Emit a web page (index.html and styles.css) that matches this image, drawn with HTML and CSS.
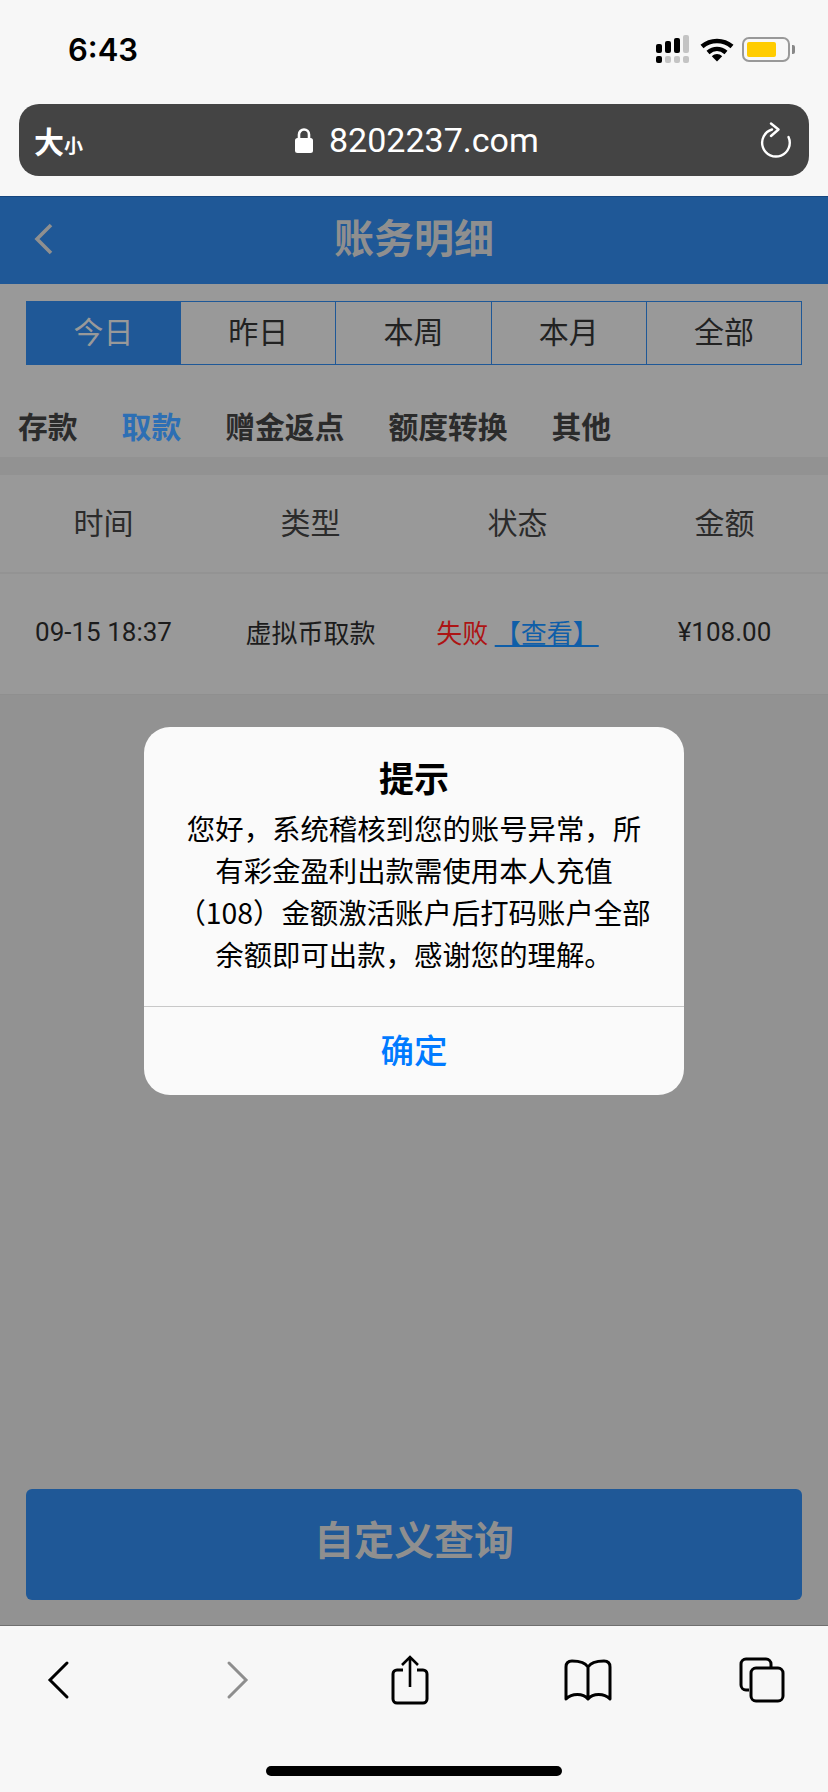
FILE: index.html
```html
<!DOCTYPE html>
<html lang="zh-CN">
<head>
  <meta charset="UTF-8" />
  <meta name="viewport" content="width=device-width, initial-scale=1.0"/>
  <title>账务明细</title>
  <link rel="stylesheet" href="styles.css">
</head>
<body>

<!-- Safari top bar -->
<div class="browser-top">
  <div class="status">
    <span class="time">6:43</span>
    <div class="status-icons">
      <svg width="34" height="28" viewBox="0 0 34 28">
        <g fill="#000">
          <rect x="0" y="9" width="6" height="9" rx="2"/>
          <rect x="9" y="6" width="6" height="12" rx="2"/>
          <rect x="18" y="3" width="6" height="15" rx="2"/>
          <rect x="0" y="21" width="6" height="7" rx="2"/>
        </g>
        <g fill="#c4c4c4">
          <rect x="27" y="0" width="6" height="18" rx="2"/>
          <rect x="9" y="21" width="6" height="7" rx="2"/>
          <rect x="18" y="21" width="6" height="7" rx="2"/>
          <rect x="27" y="21" width="6" height="7" rx="2"/>
        </g>
      </svg>
      <svg class="wifi" width="34" height="25" viewBox="0 0 34 25">
        <path d="M2 9.500C10.500 2 23.500 2 32 9.500" fill="none" stroke="#000" stroke-width="4.500"/>
        <path d="M8 15.500C13.500 10.800 20.500 10.800 26 15.500" fill="none" stroke="#000" stroke-width="4.500"/>
        <path d="M11.800 19.300C15 16.300 19 16.300 22.200 19.300L17 24.500Z" fill="#000"/>
      </svg>
      <div class="battery"><div class="battery-fill"></div></div>
      <div class="battery-nub"></div>
    </div>
  </div>
  <div class="address">
    <span class="text-size">大<small>小</small></span>
    <div class="url">
      <svg width="18" height="26" viewBox="0 0 18 26">
        <path d="M4 12V7.500a5 5 0 0 1 10 0V12" fill="none" stroke="#fff" stroke-width="2.600"/>
        <rect x="0" y="11" width="18" height="15" rx="2.500" fill="#fff"/>
      </svg>
      <span>8202237.com</span>
    </div>
    <svg class="reload" width="32" height="36" viewBox="0 0 32 36">
      <path d="M12 7.500A13.800 13.800 0 1 0 28.500 15" fill="none" stroke="#fff" stroke-width="2.400" stroke-linecap="round"/>
      <path d="M11 1.500L18.500 7.500L11 14" fill="none" stroke="#fff" stroke-width="2.400" stroke-linecap="round" stroke-linejoin="round"/>
    </svg>
  </div>
</div>

<!-- Page behind the alert, dimmed -->
<div class="page">
  <div class="header">
    <svg class="header-back" width="22" height="32" viewBox="0 0 22 32">
      <path d="M18 2L4 16L18 30" fill="none" stroke="#8f8f8f" stroke-width="3.600"/>
    </svg>
    <h1>账务明细</h1>
  </div>

  <div class="tabs">
    <div class="tab active">今日</div>
    <div class="tab">昨日</div>
    <div class="tab">本周</div>
    <div class="tab">本月</div>
    <div class="tab">全部</div>
  </div>

  <div class="subtabs">
    <span>存款</span>
    <span class="current">取款</span>
    <span>赠金返点</span>
    <span>额度转换</span>
    <span>其他</span>
  </div>

  <div class="records">
    <div class="row head">
      <div>时间</div>
      <div>类型</div>
      <div>状态</div>
      <div>金额</div>
    </div>
    <div class="row item">
      <div>09-15 18:37</div>
      <div>虚拟币取款</div>
      <div><span class="failed">失败</span> <a class="look">【查看】</a></div>
      <div>¥108.00</div>
    </div>
  </div>

  <button class="query" type="button">自定义查询</button>
</div>

<!-- Safari bottom bar -->
<div class="browser-bottom">
  <div class="toolbar">
    <span class="tool">
      <svg width="24" height="40" viewBox="0 0 24 40">
        <path d="M21 3L4 20L21 37" fill="none" stroke="#000" stroke-width="3" stroke-linecap="round"/>
      </svg>
    </span>
    <span class="tool tool-forward">
      <svg width="24" height="40" viewBox="0 0 24 40">
        <path d="M3 3L20 20L3 37" fill="none" stroke="#8e8e8e" stroke-width="3" stroke-linecap="round"/>
      </svg>
    </span>
    <span class="tool">
      <svg width="38" height="50" viewBox="0 0 38 50">
        <path d="M12 15H6a4 4 0 0 0-4 4v25a4 4 0 0 0 4 4h26a4 4 0 0 0 4-4V19a4 4 0 0 0-4-4h-6" fill="none" stroke="#000" stroke-width="3"/>
        <path d="M19 32V3M11 10L19 2L27 10" fill="none" stroke="#000" stroke-width="2.600"/>
      </svg>
    </span>
    <span class="tool tool-book">
      <svg width="48" height="42" viewBox="0 0 48 42">
        <path d="M24 8C21 3 15 2 8 2C4 2 2 4 2 8V40C8 34 19 34 24 40C29 34 40 34 46 40V8C46 4 44 2 40 2C33 2 27 3 24 8ZM24 8V40" fill="none" stroke="#000" stroke-width="3" stroke-linejoin="round"/>
      </svg>
    </span>
    <span class="tool">
      <svg width="46" height="46" viewBox="0 0 46 46">
        <path d="M10 33H7a5 5 0 0 1-5-5V7a5 5 0 0 1 5-5h20a5 5 0 0 1 5 5v4" fill="none" stroke="#000" stroke-width="3"/>
        <rect x="12" y="11" width="32" height="33" rx="5" fill="none" stroke="#000" stroke-width="3"/>
      </svg>
    </span>
  </div>
  <div class="home-bar"></div>
</div>

<!-- Alert -->
<div class="alert">
  <div class="alert-body">
    <h2>提示</h2>
    <p>您好，系统稽核到您的账号异常，所有彩金盈利出款需使用本人充值（108）金额激活账户后打码账户全部余额即可出款，感谢您的理解。</p>
  </div>
  <div class="alert-ok">确定</div>
</div>

</body>
</html>
```

FILE: styles.css
```css
* {
  box-sizing: border-box;
}
body {
  position: relative;
  display: flex;
  flex-direction: column;
  width: 828px;
  height: 1792px;
  margin: 0;
  overflow: hidden;
  background: #929292;
  font-family: "Noto Sans CJK SC", sans-serif;
  color: #222;
}
svg {
  display: block;
}

/* top bar */
.browser-top {
  height: 196px;
  padding: 0 19px;
  background: #f7f7f7;
}
.status {
  display: flex;
  justify-content: space-between;
  align-items: center;
  height: 104px;
  padding: 0 14px 6px 49px;
}
.time {
  font-family: Inter, sans-serif;
  font-size: 31px;
  font-weight: 600;
  color: #000;
}
.status-icons {
  display: flex;
  align-items: center;
}
.wifi {
  margin: 0 8px 0 10px;
}
.battery {
  width: 48px;
  height: 25px;
  padding: 3px 12px 3px 3px;
  border: 2px solid #999;
  border-radius: 7px;
}
.battery-fill {
  height: 100%;
  background: #ffcc00;
  border-radius: 2px;
}
.battery-nub {
  width: 3px;
  height: 9px;
  margin-left: 2px;
  background: #888;
  border-radius: 0 2px 2px 0;
}
.address {
  position: relative;
  display: flex;
  justify-content: space-between;
  align-items: center;
  height: 72px;
  padding: 0 17px 0 15px;
  background: #444;
  border-radius: 20px;
  color: #fff;
}
.text-size {
  font-size: 30px;
  font-weight: 700;
}
.text-size small {
  font-size: 19px;
}
.url {
  position: absolute;
  left: 276px;
  display: flex;
  align-items: center;
  gap: 16px;
  font-family: Roboto, sans-serif;
  font-size: 34px;
}

/* page under the alert */
.page {
  flex: 1;
  display: flex;
  flex-direction: column;
}
.header {
  position: relative;
  height: 88px;
  background: #1f5897;
  border-top: 1px solid #16467f;
}
.header-back {
  position: absolute;
  left: 33px;
  top: 26px;
}
.header h1 {
  margin: 0;
  font-size: 40px;
  font-weight: 700;
  line-height: 78px;
  text-align: center;
  color: #8f8f8f;
}
.tabs {
  display: grid;
  grid-template-columns: repeat(5, 1fr);
  height: 81px;
  padding: 17px 26px 0 26px;
  background: #999;
}
.tab {
  height: 64px;
  border: 1px solid #1f5897;
  border-left: 0;
  font-size: 30px;
  line-height: 57px;
  text-align: center;
}
.tab:first-child {
  border-left: 1px solid #1f5897;
}
.tab.active {
  background: #1f5897;
  color: #999;
}
.subtabs {
  display: flex;
  gap: 44px;
  height: 92px;
  padding: 38px 18px 0;
  background: #999;
  font-size: 29.800px;
  font-weight: 700;
  line-height: 44px;
  color: #2b2b2b;
}
.subtabs .current {
  color: #2d6fb4;
}
.records {
  margin-top: 18px;
  background: #999;
  border-bottom: 1px solid #8f8f8f;
}
.row {
  display: grid;
  grid-template-columns: repeat(4, 1fr);
  align-items: center;
  text-align: center;
}
.head {
  height: 99px;
  padding-bottom: 6px;
  border-bottom: 2px solid #939393;
  font-size: 30px;
  color: #2b2b2b;
}
.item {
  height: 120px;
  padding-bottom: 5px;
  font-family: Roboto, "Noto Sans CJK SC", sans-serif;
  font-size: 26px;
  color: #1c1c1c;
}
.failed {
  color: #ad1414;
}
.look {
  color: #0f5ea8;
  text-decoration: underline;
}
.query {
  display: block;
  width: 776px;
  height: 111px;
  margin: auto 26px 25px;
  padding: 0 0 14px;
  border: none;
  border-radius: 6px;
  background: #1f5897;
  color: #8f8f8f;
  font-family: inherit;
  font-size: 40px;
  font-weight: 700;
}

/* bottom bar */
.browser-bottom {
  height: 167px;
  background: #f7f7f7;
  border-top: 1px solid #6f6f6f;
}
.toolbar {
  display: flex;
  justify-content: space-between;
  align-items: center;
  height: 108px;
  padding: 0 36px 0 28px;
}
.tool {
  display: flex;
  justify-content: center;
  width: 60px;
}
.tool-forward {
  margin: 0 -4px 0 4px;
}
.tool-book {
  margin: 0 -2px 0 2px;
}
.home-bar {
  width: 296px;
  height: 10px;
  margin: 32px auto 0;
  background: #000;
  border-radius: 5px;
}

/* alert */
.alert {
  position: absolute;
  left: 144px;
  top: 727px;
  width: 540px;
  height: 368px;
  display: flex;
  flex-direction: column;
  background: #fafafa;
  border-radius: 26px;
  color: #000;
}
.alert-body {
  flex: 1;
  padding: 27px 30px 0;
  text-align: center;
}
.alert-body h2 {
  margin: 0 0 7px;
  font-size: 35px;
  font-weight: 700;
  line-height: 46px;
}
.alert-body p {
  margin: 0;
  font-size: 28.400px;
  line-height: 42px;
}
.alert-ok {
  height: 89px;
  border-top: 1px solid #c8c8c8;
  font-size: 33.500px;
  font-weight: 500;
  line-height: 84px;
  text-align: center;
  color: #007aff;
}
```
